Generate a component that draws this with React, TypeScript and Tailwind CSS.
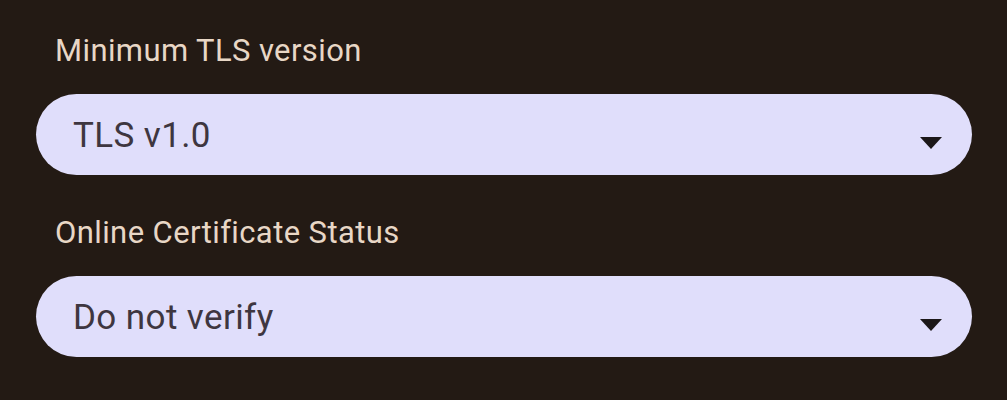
import { useState } from "react";

const fields = [
  { label: "Minimum TLS version", value: "TLS v1.0" },
  { label: "Online Certificate Status", value: "Do not verify" },
];

function DropArrow() {
  return (
    <svg width="22" height="12" viewBox="0 0 22 12" className="shrink-0">
      <path d="M0 0 L22 0 L11 12 Z" fill="#1b1718" />
    </svg>
  );
}

export default function App() {
  const [values] = useState(fields);

  return (
    <div
      className="w-[1007px] h-[400px] overflow-hidden bg-[#231a14] pl-[36px] pr-[35px] pt-[31px]"
      style={{ fontFamily: "Roboto, 'Noto Sans', sans-serif" }}
    >
      <div className="flex flex-col">
        {values.map((f, i) => (
          <div key={f.label} className={`flex flex-col ${i > 0 ? "mt-[38px]" : ""}`}>
            <label className="pl-[19px] text-[31px] leading-[40px] tracking-[0.4px] text-[#e8d7c6]">
              {f.label}
            </label>
            <button className="mt-[23px] h-[81px] w-full rounded-full bg-[#e0defb] pl-[37px] pr-[30px] flex items-center justify-between">
              <span className="text-[35px] text-[#3e3640] leading-none tracking-[0.4px] pt-[2px]">{f.value}</span>
              <span className="pt-[16px]">
                <DropArrow />
              </span>
            </button>
          </div>
        ))}
      </div>
    </div>
  );
}
